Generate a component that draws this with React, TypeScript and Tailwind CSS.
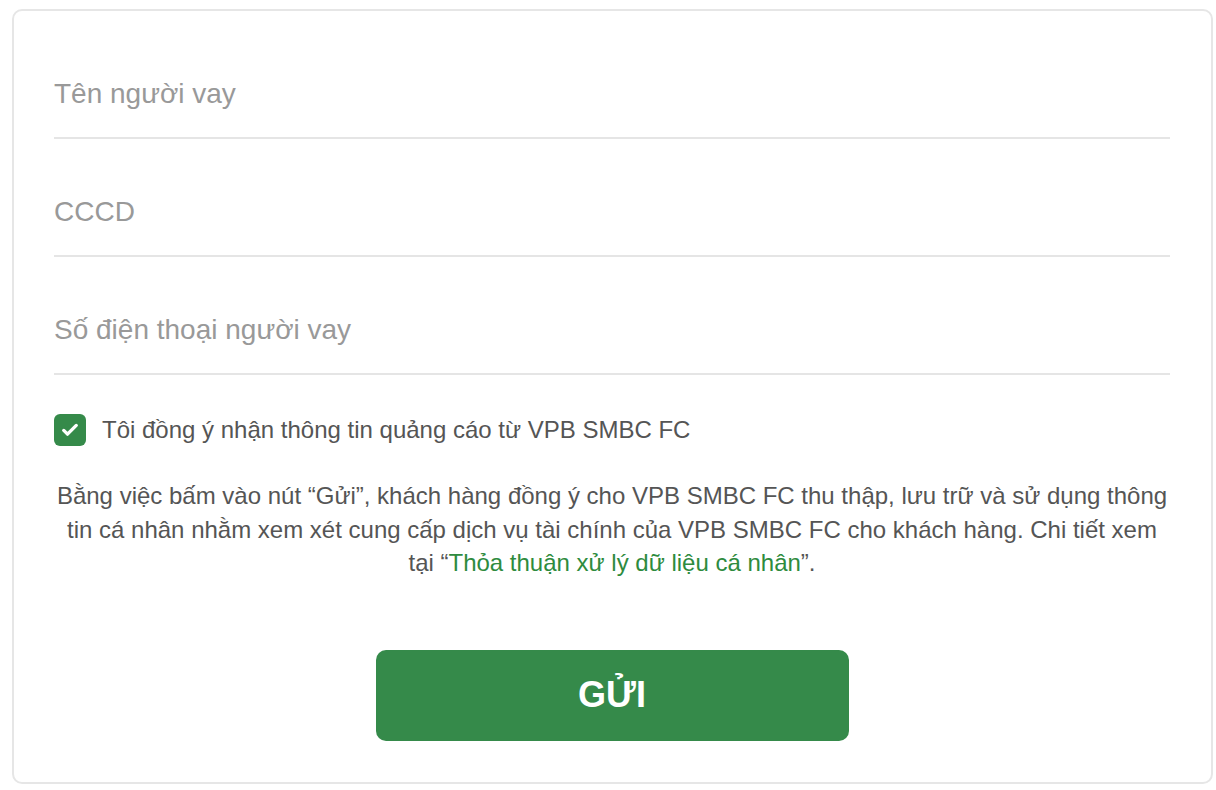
import React from "react";

export default function App() {
  const fields = ["Tên người vay", "CCCD", "Số điện thoại người vay"];
  return (
    <div
      className="w-[1216px] h-[790px] bg-white pt-[9px] pl-[12px]"
      style={{ fontFamily: '"Liberation Sans", Arial, sans-serif' }}
    >
      <div className="w-[1201px] h-[775px] border-2 border-[#e6e6e6] rounded-[10px] pt-[10px] pl-[40px] pr-[41px]">
        {fields.map((f) => (
          <div
            key={f}
            className="h-[118px] border-b-2 border-[#e5e5e5] flex items-end pb-[28px]"
          >
            <span className="text-[28px] leading-[31px] text-[#999999]">{f}</span>
          </div>
        ))}
        <div className="mt-[39px] flex items-center gap-[16px]">
          <div className="w-[32px] h-[32px] rounded-[6px] bg-[#358a4a] flex items-center justify-center">
            <svg width="20" height="20" viewBox="0 0 24 24" fill="none">
              <path
                d="M4.5 12.5l4.5 4.5L19.5 6.5"
                stroke="white"
                strokeWidth="4"
                strokeLinecap="round"
                strokeLinejoin="round"
              />
            </svg>
          </div>
          <span className="text-[24px] leading-[32px] text-[#555555]">
            Tôi đồng ý nhận thông tin quảng cáo từ VPB SMBC FC
          </span>
        </div>
        <p className="mt-[33px] text-center text-[24px] leading-[33.5px] text-[#555555]">
          Bằng việc bấm vào nút “Gửi”, khách hàng đồng ý cho VPB SMBC FC thu thập, lưu trữ và sử dụng thông tin cá nhân nhằm xem xét cung cấp dịch vụ tài chính của VPB SMBC FC cho khách hàng. Chi tiết xem tại “<span className="text-[#2e8b3e]">Thỏa thuận xử lý dữ liệu cá nhân</span>”.
        </p>
        <div className="mt-[70px] flex justify-center">
          <button className="w-[473px] h-[91px] rounded-[10px] bg-[#358a4a] text-white font-bold text-[36px]">
            GỬI
          </button>
        </div>
      </div>
    </div>
  );
}
